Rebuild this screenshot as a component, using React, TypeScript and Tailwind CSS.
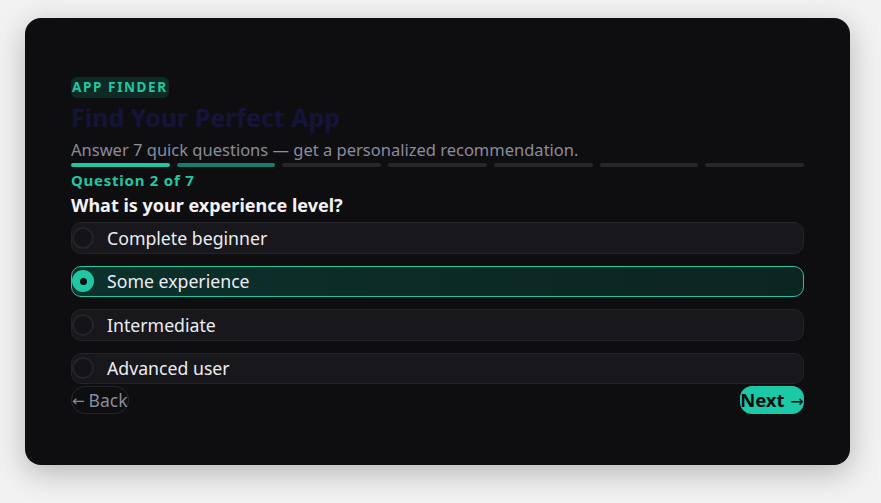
import React from "react";

const options = ["Complete beginner", "Some experience", "Intermediate", "Advanced user"];

export default function App() {
  const selected = 1;
  return (
    <div className="min-h-[503px] w-full bg-[#f2f2f2] pt-[18px] pl-[25px]" style={{ fontFamily: '"Noto Sans", "Open Sans", sans-serif' }}>
      <div className="w-[825px] h-[447px] rounded-[16px] bg-[#0e0e11] shadow-[0_8px_30px_rgba(0,0,0,0.25)] px-[46px] pt-[59px]">
        <div className="flex flex-col">
          <div className="self-start rounded-[6px] bg-[#0f2a25] px-[1px] py-[2px] text-[13.5px] leading-[17px] font-bold tracking-[0.12em] text-[#1fc7a2]">
            APP FINDER
          </div>
          <h1 className="text-[25px] leading-[38px] font-bold text-[#14143a]">Find Your Perfect App</h1>
          <p className="text-[16.5px] leading-[27px] text-[#8b8b9b]">
            Answer 7 quick questions — get a personalized recommendation.
          </p>
          <div className="flex gap-[7px] h-[4px]">
            <div className="flex-1 rounded-full bg-[#1fc7a2]" />
            <div className="flex-1 rounded-full bg-[#177d6c]" />
            <div className="flex-1 rounded-full bg-[#26262c]" />
            <div className="flex-1 rounded-full bg-[#26262c]" />
            <div className="flex-1 rounded-full bg-[#26262c]" />
            <div className="flex-1 rounded-full bg-[#26262c]" />
            <div className="flex-1 rounded-full bg-[#26262c]" />
          </div>
          <div className="mt-[3px] text-[15px] leading-[20px] font-bold tracking-[0.05em] text-[#1fc7a2]">Question 2 of 7</div>
          <div className="mt-[3px] text-[18px] leading-[24px] font-bold text-[#f3f3f7]">What is your experience level?</div>
          <div className="mt-[5px] flex flex-col gap-[12px]">
            {options.map((o, i) => {
              const sel = i === selected;
              return (
                <div
                  key={o}
                  className={
                    sel
                      ? "h-[31.5px] flex items-center rounded-[10px] border border-[#1fc7a2] bg-gradient-to-r from-[#0c302b] to-[#0c2521]"
                      : "h-[31.5px] flex items-center rounded-[10px] border border-[#232328] bg-[#18181c]"
                  }
                >
                  {sel ? (
                    <div className="w-[22px] h-[22px] rounded-full bg-[#1fc7a2] flex items-center justify-center shrink-0">
                      <div className="w-[7px] h-[7px] rounded-full bg-[#0e0e11]" />
                    </div>
                  ) : (
                    <div className="w-[22px] h-[22px] rounded-full border-2 border-[#232328] bg-[#141418] shrink-0" />
                  )}
                  <span className="ml-[13px] text-[17.7px] leading-[24px] text-[#ececf2]">{o}</span>
                </div>
              );
            })}
          </div>
          <div className="mt-[2px] flex justify-between items-center">
            <button className="h-[28px] rounded-full border border-[#26262d] text-[17.5px] leading-[24px] text-[#8a8a9c] flex items-center">
              <span style={{ fontFamily: '"DejaVu Sans", sans-serif' }} className="text-[15px] translate-y-[1px]">←</span>
              <span className="ml-[4px]">Back</span>
            </button>
            <button className="h-[28px] rounded-[12px] bg-[#1cc9a6] text-[18.5px] leading-[24px] font-bold text-[#0e0e11] flex items-center">
              <span>Next</span>
              <span style={{ fontFamily: '"DejaVu Sans", sans-serif' }} className="ml-[6px] text-[16px] font-normal translate-y-[2px]">→</span>
            </button>
          </div>
        </div>
      </div>
    </div>
  );
}
